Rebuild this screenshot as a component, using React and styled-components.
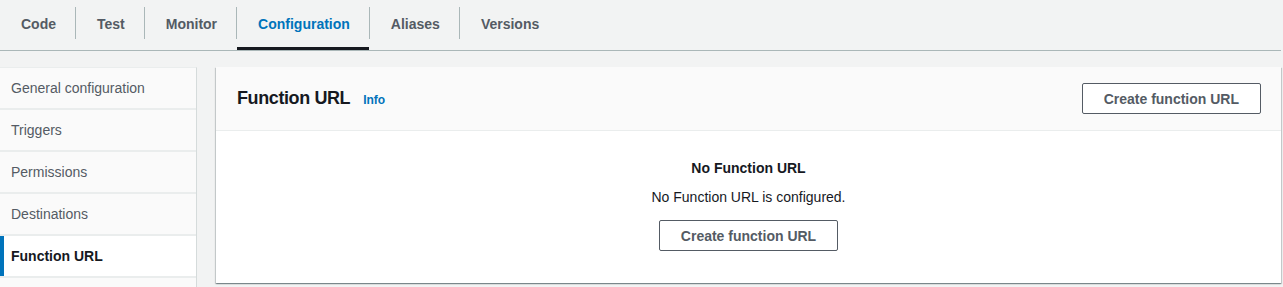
import React from "react";
import styled, { createGlobalStyle } from "styled-components";

const GlobalStyle = createGlobalStyle`
  body {
    margin: 0;
    background: #f2f3f3;
    font-family: "Liberation Sans", Arial, sans-serif;
    color: #16191f;
  }
`;

const Page = styled.div`
  width: 1281px;
`;

const TabBar = styled.nav`
  display: flex;
  height: 50px;
  border-bottom: 1px solid #aab7b8;
`;

const Tab = styled.div`
  box-sizing: border-box;
  height: 50px;
  padding: 1px 19px 0 21px;
  display: flex;
  align-items: center;
  font-size: 14px;
  font-weight: 700;
  color: ${(p) => (p.$active ? "#0073bb" : "#545b64")};
  border-bottom: 3px solid ${(p) => (p.$active ? "#16191f" : "transparent")};
  cursor: pointer;
`;

const TabDivider = styled.span`
  width: 1px;
  height: 32px;
  margin-top: 7px;
  background: #aab7b8;
`;

const Main = styled.div`
  display: flex;
  align-items: flex-start;
  gap: 19px;
  padding-top: 16px;
`;

const SideNav = styled.ul`
  list-style: none;
  margin: 0;
  padding: 0;
  width: 196px;
  flex-shrink: 0;
  display: flex;
  flex-direction: column;
  gap: 2px;
  background: #eaeded;
  border-top: 1px solid #eaeded;
  border-right: 1px solid #d5dbdb;
`;

const NavItem = styled.li`
  box-sizing: border-box;
  height: 40px;
  display: flex;
  align-items: center;
  padding-left: ${(p) => (p.$active ? "7px" : "11px")};
  border-left: ${(p) => (p.$active ? "4px solid #0073bb" : "none")};
  background: ${(p) => (p.$active ? "#ffffff" : "#fafafa")};
  font-size: 14px;
  font-weight: ${(p) => (p.$active ? 700 : 400)};
  color: ${(p) => (p.$active ? "#16191f" : "#545b64")};
`;

const Panel = styled.section`
  flex: 1;
  background: #ffffff;
  box-shadow: 0 1px 1px 0 rgba(0, 28, 36, 0.3), 1px 1px 1px 0 rgba(0, 28, 36, 0.15),
    -1px 1px 1px 0 rgba(0, 28, 36, 0.15);
`;

const PanelHeader = styled.header`
  box-sizing: border-box;
  height: 64px;
  display: flex;
  align-items: center;
  justify-content: space-between;
  padding: 0 20px 0 21px;
  background: #fafafa;
  border-bottom: 1px solid #eaeded;
`;

const TitleRow = styled.div`
  display: flex;
  align-items: baseline;
  gap: 13px;
`;

const Title = styled.h2`
  margin: 0;
  font-size: 18px;
  font-weight: 700;
  letter-spacing: -0.4px;
  color: #16191f;
`;

const InfoLink = styled.a`
  font-size: 12px;
  font-weight: 700;
  color: #0073bb;
  text-decoration: none;
`;

const Button = styled.button`
  box-sizing: border-box;
  height: 31px;
  padding: 0 21px;
  background: #ffffff;
  border: 1px solid #545b64;
  border-radius: 2px;
  font-family: inherit;
  font-size: 14px;
  font-weight: 700;
  color: #545b64;
  cursor: pointer;
`;

const EmptyState = styled.div`
  display: flex;
  flex-direction: column;
  align-items: center;
  padding: 27px 0 32px;
  font-size: 14px;
  line-height: 20px;
`;

const EmptyTitle = styled.div`
  font-weight: 700;
  color: #16191f;
`;

const EmptyText = styled.div`
  margin: 9px 0 13px;
  color: #16191f;
`;

const tabs = ["Code", "Test", "Monitor", "Configuration", "Aliases", "Versions"];
const navItems = [
  "General configuration",
  "Triggers",
  "Permissions",
  "Destinations",
  "Function URL",
];

export default function App() {
  return (
    <Page>
      <GlobalStyle />
      <TabBar>
        {tabs.map((t, i) => (
          <React.Fragment key={t}>
            {i > 0 && <TabDivider />}
            <Tab $active={t === "Configuration"}>{t}</Tab>
          </React.Fragment>
        ))}
      </TabBar>
      <Main>
        <SideNav>
          {navItems.map((n) => (
            <NavItem key={n} $active={n === "Function URL"}>
              {n}
            </NavItem>
          ))}
          <NavItem aria-hidden="true" />
        </SideNav>
        <Panel>
          <PanelHeader>
            <TitleRow>
              <Title>Function URL</Title>
              <InfoLink href="#">Info</InfoLink>
            </TitleRow>
            <Button>Create function URL</Button>
          </PanelHeader>
          <EmptyState>
            <EmptyTitle>No Function URL</EmptyTitle>
            <EmptyText>No Function URL is configured.</EmptyText>
            <Button>Create function URL</Button>
          </EmptyState>
        </Panel>
      </Main>
    </Page>
  );
}
